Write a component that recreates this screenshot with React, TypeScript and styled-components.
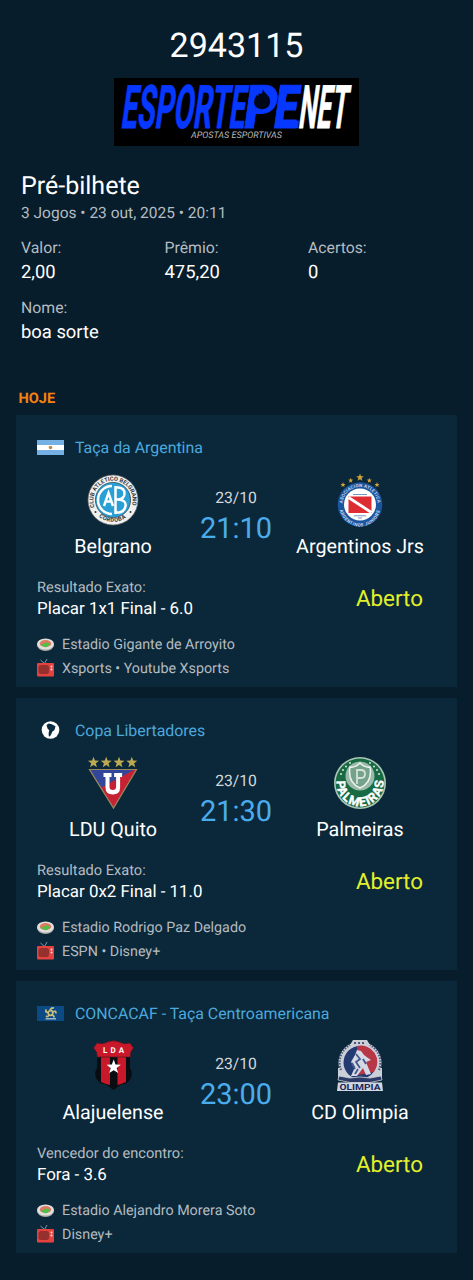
import React from "react";
import styled, { createGlobalStyle } from "styled-components";

const Global = createGlobalStyle`
  * { box-sizing: border-box; }
  html, body { margin: 0; background: #081d2b; }
  body {
    font-family: Roboto, "Liberation Sans", sans-serif;
    color: #fff;
    text-rendering: geometricPrecision;
  }
`;

const Page = styled.main`
  width: 473px;
  height: 1280px;
  background: #081d2b;
  padding: 26px 16px 0;
  overflow: hidden;
`;

const TicketNumber = styled.h1`
  margin: 0;
  font-size: 34px;
  line-height: 40px;
  font-weight: 400;
  text-align: center;
`;

const Brand = styled.div`
  height: 68px;
  margin: 12px 0 0 98px;
  width: 245px;
  background: #000;
  svg { display: block; }
`;

const Summary = styled.section`
  height: 242px;
  padding: 26px 5px 0;
`;

const Title = styled.h2`
  margin: 0;
  font-size: 25px;
  line-height: 30px;
  font-weight: 400;
`;

const Meta = styled.p`
  margin: 1px 0 13px;
  font-size: 15.5px;
  line-height: 20px;
  color: #b4bcc1;
`;

const Fields = styled.div`
  display: grid;
  grid-template-columns: repeat(3, 143.5px);
  row-gap: 12px;
`;

const FieldLabel = styled.div`
  font-size: 15.8px;
  line-height: 24px;
  color: #b4bcc1;
`;

const FieldValue = styled.div`
  font-size: 18.4px;
  line-height: 24px;
  padding-top: 1px;
  margin-bottom: -1px;
`;

const Day = styled.h3`
  margin: 0 0 0 2.5px;
  height: 27px;
  font-size: 14.6px;
  line-height: 21px;
  font-weight: 700;
  color: #f5820f;
`;

const Games = styled.div`
  display: grid;
  gap: 11px;
`;

const Card = styled.article`
  height: 272px;
  padding: 21px 21px 0;
  background: #0b283a;
`;

const League = styled.div`
  display: flex;
  align-items: center;
  height: 24px;
  gap: 11px;
  font-size: 15.9px;
  line-height: 18px;
  color: #4ba9dd;
  svg { width: 27px; height: 20px; }
`;

const Match = styled.div`
  display: grid;
  grid-template-columns: 152px 95px 152px;
  height: 98px;
  margin-top: 13px;
`;

const Team = styled.div`
  display: flex;
  flex-direction: column;
  align-items: center;
  font-size: 19.7px;
  line-height: 24px;
  white-space: nowrap;
  svg { display: block; width: 54px; height: 54px; margin-bottom: 8px; }
`;

const Kickoff = styled.div`
  text-align: center;
  padding: 15px 1px 0 0;
`;

const DateText = styled.div`
  font-size: 15.7px;
  line-height: 20px;
  color: #d3d8dc;
`;

const Time = styled.div`
  font-size: 29px;
  line-height: 34px;
  margin-top: 4px;
  color: #4bacec;
`;

const Bet = styled.div`
  display: flex;
  justify-content: space-between;
  padding-right: 13px;
  margin-top: 6px;
  height: 55px;
`;

const Market = styled.div`
  font-size: 14.6px;
  line-height: 21px;
  color: #b4bcc1;
`;

const Pick = styled.div`
  font-size: 16.9px;
  line-height: 22px;
`;

const Status = styled.div`
  padding-top: 8px;
  font-size: 22.4px;
  line-height: 28px;
  color: #e2f02b;
`;

const Info = styled.div`
  display: flex;
  align-items: center;
  height: 24px;
  gap: 8px;
  font-size: 14.3px;
  line-height: 18px;
  color: #b4bcc1;
  svg { width: 17px; height: 18px; }
  span { padding-top: 2px; }
`;

const star = (cx: number, cy: number, r: number) =>
  Array.from({ length: 10 }, (_, i) => {
    const a = (Math.PI / 5) * i - Math.PI / 2;
    const d = i % 2 ? r * 0.42 : r;
    return `${cx + d * Math.cos(a)},${cy + d * Math.sin(a)}`;
  }).join(" ");

const BrandLogo = () => (
  <svg width="245" height="68" viewBox="0 0 245 68" fontFamily="Roboto, sans-serif">
    <g transform="translate(0 49.8) skewX(-8)" fontWeight="700" fontSize="60">
      <text x="6" y="0" textLength="124" lengthAdjust="spacingAndGlyphs" fill="#0638ff" stroke="#0638ff" strokeWidth=".8">ESPORTE</text>
      <text x="128" y="0" textLength="33" lengthAdjust="spacingAndGlyphs" fill="#0638ff" stroke="#0638ff" strokeWidth="1" fontWeight="900">P</text>
      <text x="158" y="0" textLength="24" lengthAdjust="spacingAndGlyphs" fill="#0638ff" stroke="#0638ff" strokeWidth="1" fontWeight="900">E</text>
      <path d="M180.500-7h3.500v7.500h-3.500z" fill="#0638ff" />
      <text x="183.500" y="0" textLength="48.500" lengthAdjust="spacingAndGlyphs" fill="#fff" stroke="#fff" strokeWidth=".8">NET</text>
    </g>
    <path d="M149 11C150 15 155 17 156 22C157 29 151 32 146.500 31C140 30 139 25 141 20L143 16.500L144.500 19C147 17 149 14 149 11Z" fill="#000718" />
    <text x="77" y="60" fontSize="9" fontStyle="italic" textLength="91" lengthAdjust="spacingAndGlyphs" fill="#b8b8b8">APOSTAS ESPORTIVAS</text>
  </svg>
);

const ArgentinaFlag = () => (
  <svg viewBox="0 0 27 20">
    <path fill="#75b0e5" d="M0 2h27v15H0z" />
    <path fill="#fff" d="M0 7h27v5H0z" />
    <circle cx="13.5" cy="9.5" r="1.8" fill="#b99043" />
  </svg>
);

const SouthAmerica = () => (
  <svg viewBox="0 0 27 20">
    <circle cx="13.5" cy="9" r="8.8" fill="#fff" />
    <path fill="#0b2b43" d="M9.500 4l2.300-1.500 3 .8 3.700 2-1 3.800-2.200 1.700-1.300 3-1.200 1.800-1-.3-.2-3 .6-3-1.700-1.800z" />
  </svg>
);

const ConcacafFlag = () => (
  <svg viewBox="0 0 27 20">
    <path fill="#0c4a85" d="M0 2h27v15H0z" />
    <g fill="none" stroke="#c8bd7b" strokeWidth="1.700">
      <circle cx="13.5" cy="9" r="2.300" />
      <path d="M13 6.500Q14 3.500 17 4M16 8Q19 6 19 9.500M15 11Q18 12 16.500 13.500M12 11Q11 13.500 9 12M11 8.500Q7.500 8 9.500 5.500" />
    </g>
    <path d="M8.500 14.800h10.500" stroke="#c5cfd5" strokeWidth="1.200" />
  </svg>
);

const Belgrano = () => (
  <svg viewBox="0 0 54 54" fontFamily="Roboto, sans-serif" fontWeight="700">
    <defs>
      <path id="belTop" d="M8.600 34A19.600 19.600 0 1 1 45.400 34" />
      <path id="belBottom" d="M10 41A22.300 22.300 0 0 0 44 41" />
    </defs>
    <circle cx="27" cy="27" r="25" fill="#eef1f1" stroke="#716a63" strokeWidth=".7" />
    <circle cx="27" cy="27" r="17.600" fill="#2a9fd6" stroke="#30383e" strokeWidth=".7" />
    <text fontSize="5.700" fill="#303336"><textPath href="#belTop" textLength="73">CLUB ATLETICO BELGRANO</textPath></text>
    <text fontSize="5.700" fill="#303336"><textPath href="#belBottom" startOffset="4" textLength="29">CORDOBA</textPath></text>
    <circle cx="9.500" cy="39" r="1" fill="#333" /><circle cx="44.500" cy="39" r="1" fill="#333" />
    <g fill="none" stroke="#fff" strokeWidth="2.500">
      <path d="M26 13A14 14 0 0 0 26 41" />
      <path d="M18 33L22.500 20L27 33M20 28.500h6M29.500 13v28M29.500 14.500h3Q38.500 15 38.500 20.500T32 26.500H29M32 26.500Q40.500 27 39.500 33T33 39.500H29.500" />
    </g>
  </svg>
);

const Argentinos = () => (
  <svg viewBox="0 0 54 54" fontFamily="Roboto, sans-serif" fontWeight="700">
    <defs>
      <path id="argTop" d="M9.500 31.500A17.500 17.500 0 0 1 44.500 31.500" />
      <path id="argBottom" d="M6.500 33A20.500 20.500 0 0 0 47.500 33" />
    </defs>
    <g fill="#d2a338">
      <polygon points={star(27, 4.6, 4)} />
      <polygon points={star(17.7, 7.5, 2.7)} /><polygon points={star(36.3, 7.5, 2.7)} />
      <polygon points={star(10, 11.8, 2.7)} /><polygon points={star(44, 11.8, 2.7)} />
    </g>
    <circle cx="27" cy="31.500" r="22.300" fill="#1c559f" />
    <circle cx="27" cy="31.500" r="16" fill="#fff" />
    <text fontSize="4.500" fill="#c8d8ec"><textPath href="#argTop" startOffset="1" textLength="52">ASOCIACION ATLETICA</textPath></text>
    <text fontSize="4.500" fill="#c8d8ec"><textPath href="#argBottom" startOffset="4" textLength="55">ARGENTINOS JUNIORS</textPath></text>
    <path fill="#dd2d32" d="M15.500 23.500h23v16.500h-23z" />
    <path d="M15.500 24.500L38.500 39.500" stroke="#fff" strokeWidth="2.800" />
    <path d="M20 21.500h14M21 42.800h12M25 45h4" stroke="#7897be" strokeWidth="1" />
  </svg>
);

const Ldu = () => (
  <svg viewBox="0 0 54 54">
    <g fill="#bda951">{[7.5, 20.2, 33, 45.8].map((x) => <polygon key={x} points={star(x, 6.5, 5.8)} />)}</g>
    <path fill="#c62233" d="M3.500 13.500h47L27.500 52z" />
    <path fill="#32479a" d="M3.500 13.500h45L14.500 32z" />
    <path fill="none" stroke="#9b885e" strokeWidth="1.200" d="M3.500 13.500h47L27.500 52z" />
    <path d="M17.500 17h8v4h-2v10q0 3 3.300 3t3.300-3v-10h-2v-4h8v4h-2v10.500q0 7-7.300 7t-7.300-7V21h-2z" fill="#fff" />
  </svg>
);

const Palmeiras = () => (
  <svg viewBox="0 0 54 54" fontFamily="Roboto, sans-serif" fontWeight="700">
    <defs><path id="palArc" d="M4 22A23.500 23.500 0 1 0 50 22" /></defs>
    <circle cx="27" cy="27" r="26" fill="#a8c6b4" />
    <circle cx="27" cy="27" r="24.400" fill="#176a43" />
    <circle cx="27" cy="20" r="14.500" fill="#9abaa9" />
    <path fill="#75a28b" stroke="#edf3ee" strokeWidth="1.500" d="M17 11q5 1 10-4 5 5 10 4c2 12-3 18-10 21-7-3-12-9-10-21z" />
    <path d="M24 28V14h4q4 0 4 4t-4 4h-3" fill="none" stroke="#d6e2da" strokeWidth="1.800" />
    <text fontSize="12.500" fill="#fff" stroke="#fff" strokeWidth=".4"><textPath href="#palArc" startOffset="3" textLength="78">PALMEIRAS</textPath></text>
    <g fill="#edf2ed">{[[8, 18], [10, 14], [13, 10.5], [17, 7], [46, 18], [44, 14], [41, 10.5], [37, 7]].map(([x, y]) => <circle key={`${x}-${y}`} cx={x} cy={y} r=".9" />)}</g>
  </svg>
);

const Alajuelense = () => (
  <svg viewBox="0 0 54 54" fontFamily="Roboto, sans-serif" fontWeight="700">
    <path fill="#090c10" d="M11 16h33v13q3 4 1 10-3 6-10 6.500L27.500 51 20 45.500Q13 45 10 39q-2-6 1-10z" />
    <path fill="#c9182a" d="M15 16h9v30l-4-1-5-2zM31.500 16h8.500v27l-5 2-3.500 1z" />
    <path fill="#c9182a" stroke="#4c1824" strokeWidth=".7" d="M11 4q6 2 10.500-1 6-2.500 12 0 4.500 3 10.500 1l3.500 5q-4 4-3 9H11Q12 13 7.500 9z" />
    <text x="17" y="14" fontSize="8" textLength="21" fill="#fff">LDA</text>
    <polygon points={star(27.7, 28, 7.5)} fill="#fff" />
  </svg>
);

const Olimpia = () => (
  <svg viewBox="0 0 54 54" fontFamily="Roboto, sans-serif" fontWeight="700">
    <circle cx="27" cy="24" r="21.500" fill="#cbd0d8" />
    <path fill="#cbd0d8" d="M20 1h14l3 5H17zM5 29h7v10H5zM42 29h7v10h-7z" />
    <circle cx="27" cy="23.500" r="16.500" fill="#243a72" />
    <path d="M24 7a16.500 16.500 0 0 1 17 26L25 36z" fill="#b83746" />
    <path d="M8 31A20 20 0 0 1 17 6M46 31A20 20 0 0 0 37 6" fill="none" stroke="#4d5978" strokeWidth="2.200" strokeDasharray="1.500 1.300" />
    <path d="M21 4h12" stroke="#4d5978" strokeWidth="2" strokeDasharray="2 2" />
    <path fill="#d5d9e6" d="M24 11l4 1 3 4 4 3 3 2-5 2 2 5 3 7-5 1-3-7-6 8h-6l4-9-4-5 4-7z" />
    <path d="M23 15l4 5-4 3 4 6M19 24l3 6M30 20l3 5M25 30l-3 5" stroke="#45578b" strokeWidth="1.800" fill="none" />
    <path d="M6 37l11 2q10-2 20 0l11-2 1 4-12 2.500H17L5 41z" fill="#2c3a68" stroke="#cbd0d8" strokeWidth=".8" />
    <path fill="#d2d6dd" d="M5 43.500h44l1 8.500H4z" />
    <text x="6.500" y="50.800" fontSize="8.500" textLength="41" lengthAdjust="spacingAndGlyphs" fill="#17295c">OLIMPIA</text>
  </svg>
);

const StadiumIcon = () => (
  <svg viewBox="0 0 17 18">
    <ellipse cx="8.500" cy="10" rx="8.500" ry="6" fill="#aaa9a6" />
    <ellipse cx="8.500" cy="9" rx="8.400" ry="5.600" fill="#e1e0dd" />
    <ellipse cx="8.500" cy="8.500" rx="5.700" ry="3.600" fill="#dc7a62" />
    <path fill="#4fc048" d="M3.500 10l6-2.500 4 1.500-4.500 3.500z" />
  </svg>
);

const TvIcon = () => (
  <svg viewBox="0 0 17 18">
    <path d="M3.500 1l4 3.500L10 0" fill="none" stroke="#8299a4" />
    <rect y="4" width="17" height="13.500" rx="1" fill="#e5423f" />
    <rect x="1.500" y="6" width="10.500" height="9" rx="2.500" fill="#96302f" />
    <circle cx="14.500" cy="7.500" r="1" fill="#f5dfdc" /><circle cx="14.500" cy="10.500" r="1" fill="#f5dfdc" />
  </svg>
);

const games = [
  { league: "Taça da Argentina", Flag: ArgentinaFlag, home: "Belgrano", Home: Belgrano, away: "Argentinos Jrs", Away: Argentinos, time: "21:10", market: "Resultado Exato:", pick: "Placar 1x1 Final - 6.0", venue: "Estadio Gigante de Arroyito", tv: "Xsports • Youtube Xsports" },
  { league: "Copa Libertadores", Flag: SouthAmerica, home: "LDU Quito", Home: Ldu, away: "Palmeiras", Away: Palmeiras, time: "21:30", market: "Resultado Exato:", pick: "Placar 0x2 Final - 11.0", venue: "Estadio Rodrigo Paz Delgado", tv: "ESPN • Disney+" },
  { league: "CONCACAF - Taça Centroamericana", Flag: ConcacafFlag, home: "Alajuelense", Home: Alajuelense, away: "CD Olimpia", Away: Olimpia, time: "23:00", market: "Vencedor do encontro:", pick: "Fora - 3.6", venue: "Estadio Alejandro Morera Soto", tv: "Disney+" },
];

const fields = [["Valor:", "2,00"], ["Prêmio:", "475,20"], ["Acertos:", "0"], ["Nome:", "boa sorte"]];

export default function App() {
  return (
    <>
      <Global />
      <Page>
        <TicketNumber>2943115</TicketNumber>
        <Brand><BrandLogo /></Brand>
        <Summary>
          <Title>Pré-bilhete</Title>
          <Meta>3 Jogos • 23 out, 2025 • 20:11</Meta>
          <Fields>
            {fields.map(([label, value]) => (
              <div key={label}>
                <FieldLabel>{label}</FieldLabel>
                <FieldValue>{value}</FieldValue>
              </div>
            ))}
          </Fields>
        </Summary>
        <Day>HOJE</Day>
        <Games>
          {games.map((g) => (
            <Card key={g.league}>
              <League><g.Flag />{g.league}</League>
              <Match>
                <Team><g.Home />{g.home}</Team>
                <Kickoff>
                  <DateText>23/10</DateText>
                  <Time>{g.time}</Time>
                </Kickoff>
                <Team><g.Away />{g.away}</Team>
              </Match>
              <Bet>
                <div>
                  <Market>{g.market}</Market>
                  <Pick>{g.pick}</Pick>
                </div>
                <Status>Aberto</Status>
              </Bet>
              <Info><StadiumIcon /><span>{g.venue}</span></Info>
              <Info><TvIcon /><span>{g.tv}</span></Info>
            </Card>
          ))}
        </Games>
      </Page>
    </>
  );
}
